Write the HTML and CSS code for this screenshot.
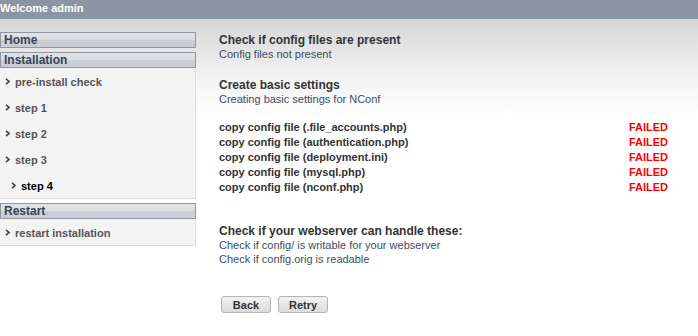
FILE: index.html
```html
<!DOCTYPE html>
<html lang="en">
<head>
  <meta charset="UTF-8">
  <title>NConf Installation</title>
  <link rel="stylesheet" href="styles.css">
</head>
<body>
  <div class="topbar">Welcome admin</div>

  <div class="page">
    <div class="sidebar">
      <div class="nav-title">Home</div>
      <div class="nav-title">Installation</div>
      <ul class="nav-list">
        <li class="nav-item"><svg class="arrow" width="5" height="7" viewBox="0 0 5 7"><polyline points="1,0.8 4,3.5 1,6.2"/></svg>pre-install check</li>
        <li class="nav-item"><svg class="arrow" width="5" height="7" viewBox="0 0 5 7"><polyline points="1,0.8 4,3.5 1,6.2"/></svg>step 1</li>
        <li class="nav-item"><svg class="arrow" width="5" height="7" viewBox="0 0 5 7"><polyline points="1,0.8 4,3.5 1,6.2"/></svg>step 2</li>
        <li class="nav-item"><svg class="arrow" width="5" height="7" viewBox="0 0 5 7"><polyline points="1,0.8 4,3.5 1,6.2"/></svg>step 3</li>
        <li class="nav-item current"><svg class="arrow" width="5" height="7" viewBox="0 0 5 7"><polyline points="1,0.8 4,3.5 1,6.2"/></svg>step 4</li>
      </ul>
      <div class="nav-title">Restart</div>
      <ul class="nav-list">
        <li class="nav-item"><svg class="arrow" width="5" height="7" viewBox="0 0 5 7"><polyline points="1,0.8 4,3.5 1,6.2"/></svg>restart installation</li>
      </ul>
    </div>

    <div class="content">
      <h2 class="step-title">Check if config files are present</h2>
      <p class="step-text">Config files not present</p>

      <h2 class="step-title spaced">Create basic settings</h2>
      <p class="step-text">Creating basic settings for NConf</p>

      <table class="result-table">
        <tr><td>copy config file (.file_accounts.php)</td><td class="failed">FAILED</td></tr>
        <tr><td>copy config file (authentication.php)</td><td class="failed">FAILED</td></tr>
        <tr><td>copy config file (deployment.ini)</td><td class="failed">FAILED</td></tr>
        <tr><td>copy config file (mysql.php)</td><td class="failed">FAILED</td></tr>
        <tr><td>copy config file (nconf.php)</td><td class="failed">FAILED</td></tr>
      </table>

      <h2 class="step-title webserver">Check if your webserver can handle these:</h2>
      <p class="step-text tight">Check if config/ is writable for your webserver</p>
      <p class="step-text tight">Check if config.orig is readable</p>

      <div class="buttons">
        <button class="btn">Back</button>
        <button class="btn">Retry</button>
      </div>
    </div>
  </div>
</body>
</html>
```

FILE: styles.css
```css
body {
  margin: 0;
  font-family: "Liberation Sans", Arial, sans-serif;
  background: #fff;
  color: #333;
}

.topbar {
  height: 19px;
  line-height: 17px;
  background-color: #8b95a3;
  color: #fff;
  font-size: 11px;
  font-weight: bold;
}

.page {
  display: flex;
  min-height: 317px;
  background: linear-gradient(#d6d6d6, #f4f4f4 60px, #fff 100px);
}

.sidebar {
  width: 196px;
  padding-top: 13px;
  flex-shrink: 0;
}

.nav-title {
  box-sizing: border-box;
  height: 16px;
  line-height: 14px;
  padding-left: 3px;
  margin-top: 4px;
  border: 1px solid #8d97a5;
  background: linear-gradient(#e0e3e6 0%, #dadee1 50%, #ccd0d4 51%, #c9cdd1 100%);
  color: #354556;
  font-size: 12px;
  font-weight: bold;
}

.nav-title:first-child {
  margin-top: 0;
}

.nav-list {
  list-style: none;
  margin: 0;
  padding: 0;
  background: #f3f3f3;
  border-right: 1px solid #dedede;
  border-bottom: 1px solid #dedede;
}

.nav-item {
  display: flex;
  align-items: center;
  height: 26px;
  padding-left: 5px;
  padding-top: 1px;
  box-sizing: border-box;
  color: #555;
  font-size: 11px;
  font-weight: bold;
}

.nav-item.current {
  padding-left: 11px;
  color: #000;
}

.arrow {
  margin-right: 5px;
  fill: none;
  stroke: #444;
  stroke-width: 1.6;
}

.content {
  flex: 1;
  padding: 14px 30px 0 23px;
}

.step-title {
  margin: 0;
  font-size: 12px;
  line-height: 14px;
  color: #333;
}

.step-title.spaced {
  margin-top: 16px;
}

.step-title.webserver {
  margin-top: 30px;
}

.step-text {
  margin: 0;
  font-size: 11px;
  line-height: 15px;
  color: #3b4d60;
}

.step-text.tight {
  line-height: 14px;
}

.result-table {
  width: 100%;
  margin-top: 12px;
  border-collapse: collapse;
}

.result-table td {
  padding: 0;
  height: 15px;
  font-size: 11px;
  font-weight: bold;
  color: #333;
}

.result-table .failed {
  text-align: right;
  color: #ff0000;
}

.buttons {
  display: flex;
  gap: 7px;
  margin-top: 30px;
  padding-left: 2px;
}

.btn {
  width: 50px;
  height: 17px;
  padding: 0;
  border: 1px solid #b4b4b4;
  border-radius: 3px;
  background: linear-gradient(#f2f2f2, #dcdcdc);
  color: #333;
  font-family: "Liberation Sans", Arial, sans-serif;
  font-size: 11px;
  font-weight: bold;
}
```
